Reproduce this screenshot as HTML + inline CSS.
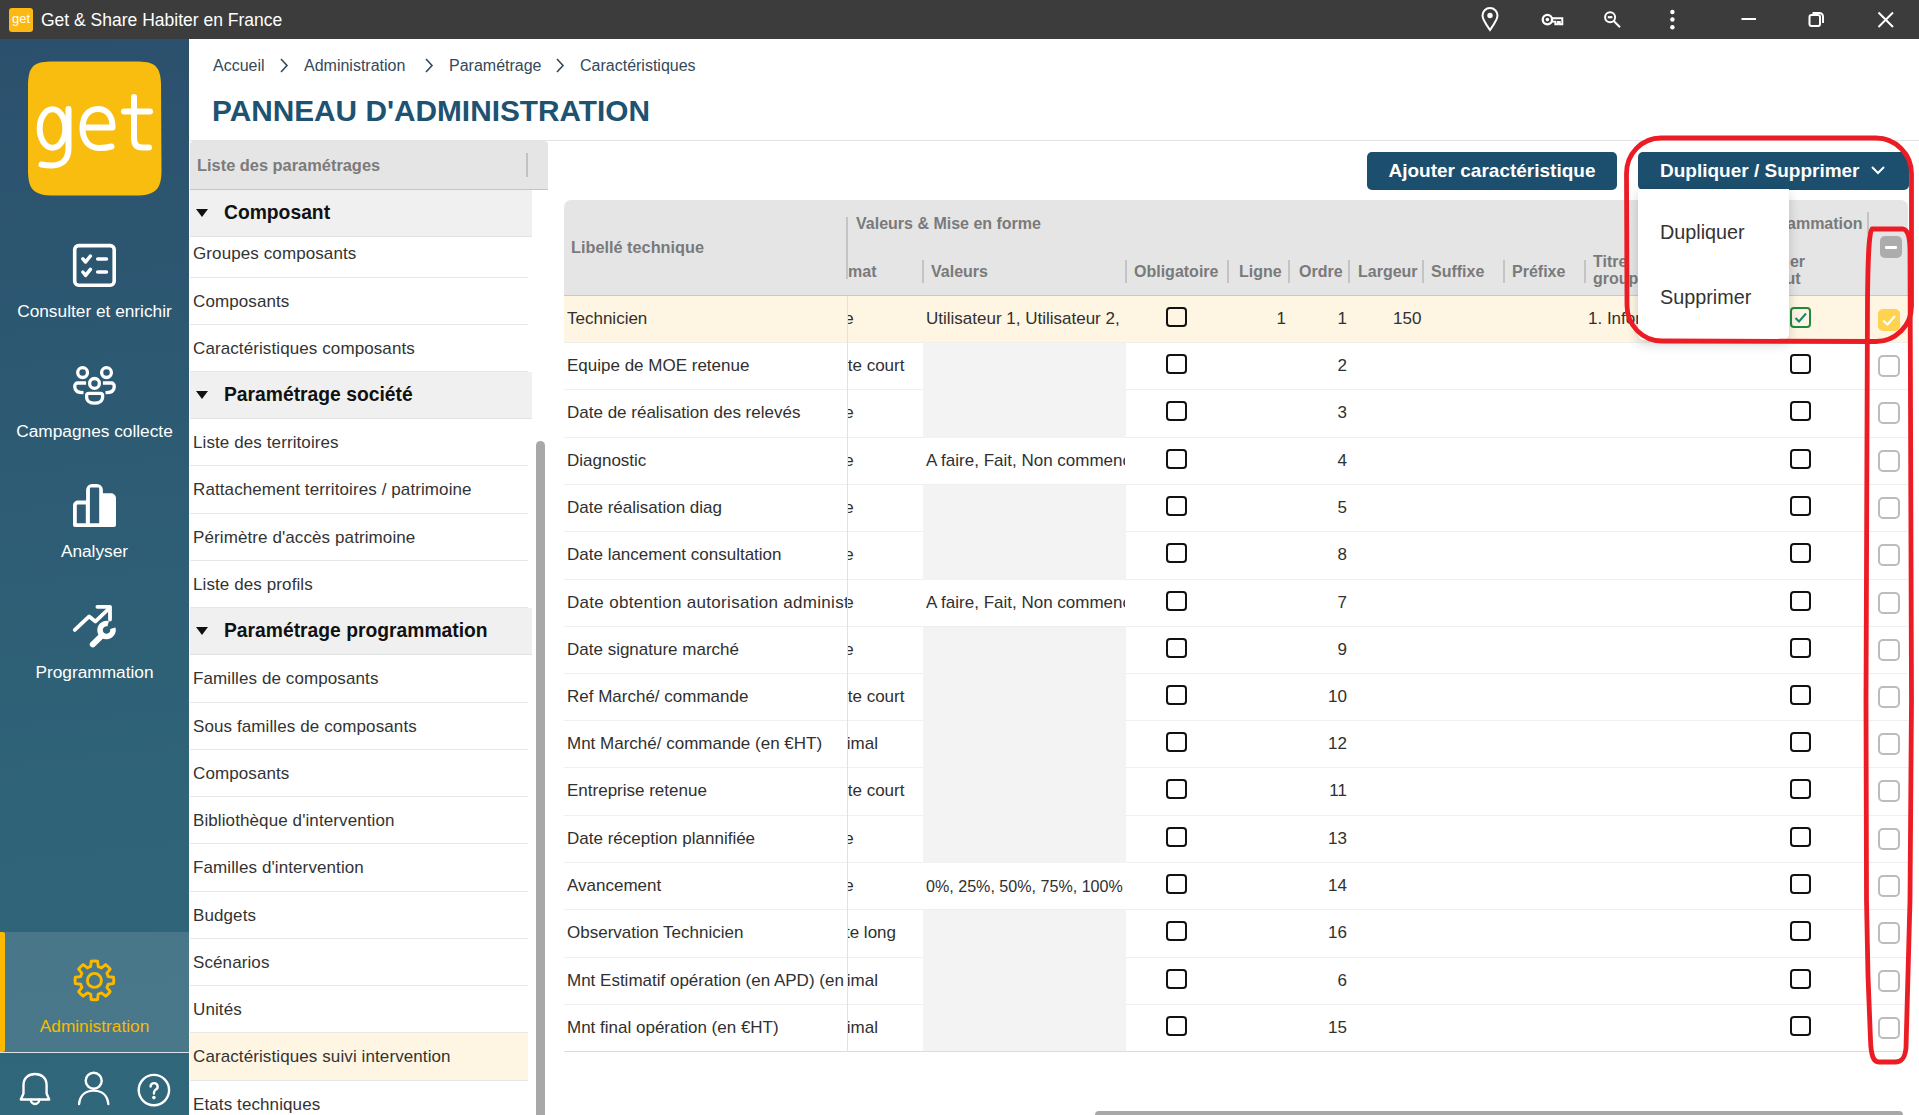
<!DOCTYPE html><html><head><meta charset="utf-8"><style>
*{box-sizing:border-box;margin:0;padding:0}
html,body{width:1919px;height:1115px;overflow:hidden;background:#fff;font-family:"Liberation Sans",sans-serif;position:relative;color:#222}
.a{position:absolute;white-space:nowrap}
#titlebar{left:0;top:0;width:1919px;height:39px;background:#3c3c3c}
#sidebar{left:0;top:39px;width:189px;height:1076px;background:linear-gradient(174deg,#2b506d 0%,#2d5a73 35%,#2f6378 68%,#30677a 100%);overflow:hidden}
.navtxt{position:absolute;left:0;width:189px;text-align:center;color:#fff;font-size:17.3px;line-height:20px}
.bc{color:#34495a;font-size:16px;line-height:20px}
.lp-item{position:absolute;left:190px;width:338px;height:47px;border-bottom:1px solid #e6e6e6;font-size:17px;letter-spacing:0.1px;color:#333;padding-left:3px;line-height:48px}
.lp-grp{position:absolute;left:190px;width:342px;height:47px;background:#f0f0f0;border-bottom:1px solid #e2e2e2;font-size:19.3px;font-weight:bold;color:#111;padding-left:34px;line-height:46px}
.tri{position:absolute;left:6px;top:19px;width:0;height:0;border-left:6px solid transparent;border-right:6px solid transparent;border-top:8px solid #111}
.btn{position:absolute;top:152px;height:38px;background:#1c4e6d;border-radius:5px;color:#fff;font-size:19px;font-weight:bold;line-height:38px;text-align:center}
.th{position:absolute;font-size:16px;font-weight:bold;color:#7a7a7a;line-height:18px;white-space:nowrap}
.dv{position:absolute;width:2px;background:#c4c4c4}
.row{position:absolute;left:564px;width:1344px;border-bottom:1px solid #efefef}
.td{position:absolute;font-size:17px;color:#303030;line-height:20px;white-space:nowrap}
.cb{position:absolute;width:20.5px;height:20px;border:2px solid #111;border-radius:4px}
.cb2{position:absolute;width:22px;height:22px;border:2px solid #bcbcbc;border-radius:5px}
</style></head><body>
<div id="titlebar" class="a">
<div class="a" style="left:9px;top:8px;width:24px;height:24px;background:#fdb813;border-radius:3px;color:#fff;font-size:13px;line-height:21px;text-align:center">get</div>
<div class="a" style="left:41px;top:10px;font-size:17.5px;line-height:20px;color:#fff">Get &amp; Share Habiter en France</div>
<svg class="a" style="left:1470px;top:0" width="449" height="39" viewBox="1470 0 449 39">
<g fill="none" stroke="#fff" stroke-width="2">
<path d="M1490 30 C1485.5 23.5 1482.5 19.5 1482.5 15.5 A7.5 7.5 0 0 1 1497.5 15.5 C1497.5 19.5 1494.5 23.5 1490 30 Z"/>
<circle cx="1547.4" cy="19.6" r="4.7" stroke-width="2.3"/>
<path d="M1552 18.2 H1562.3 V24.3 H1559.8 V22 H1557.8 V24.3 H1555.3 V21.6 H1552" stroke-width="1.9"/>
<circle cx="1610.1" cy="17.2" r="5" stroke-width="2"/>
<path d="M1607.8 17.2 H1612.4" stroke-width="2.2"/>
<path d="M1614 21.2 L1620 27.3" stroke-width="2"/>
<path d="M1741.5 19 H1756"/>
<rect x="1809.5" y="15" width="10.5" height="11" rx="2"/>
<path d="M1812.5 13 H1819.5 A3.5 3.5 0 0 1 1823 16.5 V23"/>
<path d="M1878.5 12.5 L1893 27 M1893 12.5 L1878.5 27"/>
</g>
<circle cx="1490" cy="15.5" r="2.7" fill="#fff"/>
<circle cx="1547.4" cy="19.6" r="1.8" fill="#fff"/>
<circle cx="1672.4" cy="12" r="2.2" fill="#fff"/>
<circle cx="1672.4" cy="19.5" r="2.2" fill="#fff"/>
<circle cx="1672.4" cy="27.2" r="2.2" fill="#fff"/>
</svg>
</div>
<div id="sidebar" class="a">
<svg class="a" style="left:0;top:0" width="189" height="200" viewBox="0 39 189 200">
<path d="M50 61.5 L139 61.5 C155 62 160.5 67 161 84 L161.5 172 C161 189 155.5 194.5 139 195.5 L50 195.5 C33.5 194.5 28.5 189 28 172 L28 84 C28.5 67 33.5 62 50 61.5 Z" fill="#f8bd0f"/>
<g fill="none" stroke="#fff" stroke-width="6" stroke-linecap="round" stroke-linejoin="round">
<ellipse cx="52.5" cy="128.5" rx="12.8" ry="19.2"/>
<path d="M68.5 109 L68.5 148 C68.5 160 62 165.5 52 165.5 C47 165.5 44 165 41.5 164.5"/>
<path d="M82.5 127.5 L112.5 127.5 C112.5 115 106.5 109 98 109 C88 109 82.5 117 82.5 128.5 C82.5 140 89 148 99 148 C104 148 108 147.5 111.5 146.5"/>
<path d="M134 97 L134 138 C134 145 137 147.5 142 147.5 L149 147.5"/>
<path d="M124 111.5 L150 111.5"/>
</g></svg>
<div class="navtxt" style="top:262px">Consulter et enrichir</div>
<div class="navtxt" style="top:382px">Campagnes collecte</div>
<div class="navtxt" style="top:502px">Analyser</div>
<div class="navtxt" style="top:623px">Programmation</div>
<svg class="a" style="left:0;top:0" width="189" height="1076" viewBox="0 39 189 1076">
<g fill="none" stroke="#fff" stroke-width="3.6" stroke-linecap="round" stroke-linejoin="round">
<rect x="74.7" y="245.6" width="39.5" height="39.6" rx="4"/>
</g>
<g fill="none" stroke="#fff" stroke-width="3.5" stroke-linecap="round" stroke-linejoin="round">
<path d="M82.9 258.9 L85.6 262 L90.4 256 M82.9 272 L85.6 275.3 L90.4 269.3"/>
<path d="M97.7 259 H106.5 M97.7 272 H106.5"/>
</g>
<g fill="none" stroke="#fff" stroke-width="3.3" stroke-linecap="butt" stroke-linejoin="round">
<circle cx="82.6" cy="372.6" r="4.9"/><circle cx="106.5" cy="372.6" r="4.9"/><circle cx="94.5" cy="383.4" r="4.9"/>
<path d="M86.1 383 H77.6 A2.8 2.8 0 0 0 74.8 385.8 V387 C74.8 391 78.5 392.7 83.5 392.7"/>
<path d="M102.9 383 H111.4 A2.8 2.8 0 0 1 114.2 385.8 V387 C114.2 391 110.5 392.7 105.5 392.7"/>
<path d="M88.9 393.4 H100.3 A2.3 2.3 0 0 1 102.6 395.7 V397 C102.6 401 99 403.2 94.6 403.2 C90.2 403.2 86.6 401 86.6 397 V395.7 A2.3 2.3 0 0 1 88.9 393.4 Z"/>
</g>
<path fill="#fff" fill-rule="evenodd" d="M73 525 V505.6 A5 5 0 0 1 78 500.6 H86.1 V490 A6 6 0 0 1 92.1 484 H96.9 A6 6 0 0 1 102.9 490 V493.3 H111 A5 5 0 0 1 116 498.3 V525 A2 2 0 0 1 114 527 H75 A2 2 0 0 1 73 525 Z M76.8 505.6 A1 1 0 0 1 77.8 504.6 H85.8 V523.2 H76.8 Z M89.9 488.5 A1 1 0 0 1 90.9 487.5 H98.2 A1 1 0 0 1 99.2 488.5 V523.2 H89.9 Z"/>
<g fill="none" stroke="#fff" stroke-width="3.8" stroke-linecap="round" stroke-linejoin="round">
<path d="M74.8 629.9 L89.2 616.4 L95.5 621.4 L108.5 609"/>
<path d="M97.4 606.8 H110 V619.5"/>
</g>
<path d="M112.8 628.3 A6.5 6.5 0 1 1 108.2 623.7" fill="none" stroke="#fff" stroke-width="5.5"/>
<path d="M100.5 636.8 L92.8 644.3" fill="none" stroke="#fff" stroke-width="6" stroke-linecap="round"/>
</svg>
<div class="a" style="left:0;top:893px;width:189px;height:120px;background:rgba(255,255,255,0.12)"></div>
<div class="a" style="left:0;top:893px;width:5px;height:120px;background:#fbb900;border-radius:0 2px 2px 0"></div>
<div class="a" style="left:0;top:1013px;width:189px;height:1px;background:#d9e2e6"></div>
<div class="navtxt" style="top:977px;color:#fbb900">Administration</div>
<svg class="a" style="left:0;top:0" width="189" height="1076" viewBox="0 39 189 1076">
<g fill="none" stroke="#fbb900" stroke-width="2.9" stroke-linejoin="round">
<circle cx="94.4" cy="980.4" r="7"/>
<path d="M90.58 966.62 L91.20 961.27 A19.4 19.4 0 0 1 97.60 961.27 L98.22 966.62 A14.3 14.3 0 0 1 101.44 967.95 L105.67 964.61 A19.4 19.4 0 0 1 110.19 969.13 L106.85 973.36 A14.3 14.3 0 0 1 108.18 976.58 L113.53 977.20 A19.4 19.4 0 0 1 113.53 983.60 L108.18 984.22 A14.3 14.3 0 0 1 106.85 987.44 L110.19 991.67 A19.4 19.4 0 0 1 105.67 996.19 L101.44 992.85 A14.3 14.3 0 0 1 98.22 994.18 L97.60 999.53 A19.4 19.4 0 0 1 91.20 999.53 L90.58 994.18 A14.3 14.3 0 0 1 87.36 992.85 L83.13 996.19 A19.4 19.4 0 0 1 78.61 991.67 L81.95 987.44 A14.3 14.3 0 0 1 80.62 984.22 L75.27 983.60 A19.4 19.4 0 0 1 75.27 977.20 L80.62 976.58 A14.3 14.3 0 0 1 81.95 973.36 L78.61 969.13 A19.4 19.4 0 0 1 83.13 964.61 L87.36 967.95 A14.3 14.3 0 0 1 90.58 966.62 Z"/>
</g>
<g fill="none" stroke="#fff" stroke-width="2.4" stroke-linecap="round" stroke-linejoin="round">
<path d="M20.8 1099.5 H49.2 L46.6 1093.5 V1085 C46.6 1078 41.5 1074 35 1074 C28.5 1074 23.5 1078 23.5 1085 V1093.5 Z"/>
<path d="M30.8 1099.8 A4.2 4.2 0 0 0 39.2 1099.8"/>
<circle cx="93.7" cy="1080.8" r="8"/>
<path d="M79.1 1104 C80 1095 86 1090.6 93.7 1090.6 C101.4 1090.6 107.4 1095 108.3 1104"/>
<circle cx="153.9" cy="1090.1" r="15.2"/>
<path d="M150.6 1086.6 A3.5 3.5 0 1 1 155.3 1089.9 C154.3 1090.7 153.9 1091.5 153.9 1093.6"/>
</g>
<circle cx="153.9" cy="1097.6" r="1.8" fill="#fff"/>
</svg>
</div>
<div class="a bc" style="left:213px;top:55.5px">Accueil</div>
<div class="a bc" style="left:304px;top:55.5px">Administration</div>
<div class="a bc" style="left:449px;top:55.5px">Paramétrage</div>
<div class="a bc" style="left:580px;top:55.5px">Caractéristiques</div>
<svg class="a" style="left:270px;top:50px" width="320" height="30" viewBox="270 50 320 30"><g fill="none" stroke="#34495a" stroke-width="1.6"><path d="M281 59 L287 65.5 L281 72"/><path d="M426 59 L432 65.5 L426 72"/><path d="M557 59 L563 65.5 L557 72"/></g></svg>
<div class="a" style="left:212px;top:93px;font-size:29.8px;line-height:36px;font-weight:bold;color:#1d5271">PANNEAU D'ADMINISTRATION</div>
<div class="a" style="left:190px;top:140px;width:1729px;height:1px;background:#e3e3e3"></div>
<div class="a" style="left:190px;top:141px;width:358px;height:49px;background:#e5e5e5;border-bottom:1px solid #c4c4c4;border-radius:4px 4px 0 0"></div>
<div class="a" style="left:197px;top:155px;font-size:16.4px;line-height:20px;font-weight:bold;color:#7b7b7b">Liste des paramétrages</div>
<div class="a" style="left:526px;top:153px;width:2px;height:24px;background:#c2c2c2"></div>
<div class="lp-item" style="top:230px;height:48px;">Groupes composants</div>
<div class="lp-item" style="top:278px;height:47px;">Composants</div>
<div class="lp-item" style="top:325px;height:47px;">Caractéristiques composants</div>
<div class="lp-grp" style="top:372px;height:47px"><div class="tri"></div>Paramétrage société</div>
<div class="lp-item" style="top:419px;height:47px;">Liste des territoires</div>
<div class="lp-item" style="top:466px;height:48px;">Rattachement territoires / patrimoine</div>
<div class="lp-item" style="top:514px;height:47px;">Périmètre d'accès patrimoine</div>
<div class="lp-item" style="top:561px;height:47px;">Liste des profils</div>
<div class="lp-grp" style="top:608px;height:47px"><div class="tri"></div>Paramétrage programmation</div>
<div class="lp-item" style="top:655px;height:48px;">Familles de composants</div>
<div class="lp-item" style="top:703px;height:47px;">Sous familles de composants</div>
<div class="lp-item" style="top:750px;height:47px;">Composants</div>
<div class="lp-item" style="top:797px;height:47px;">Bibliothèque d'intervention</div>
<div class="lp-item" style="top:844px;height:48px;">Familles d'intervention</div>
<div class="lp-item" style="top:892px;height:47px;">Budgets</div>
<div class="lp-item" style="top:939px;height:47px;">Scénarios</div>
<div class="lp-item" style="top:986px;height:47px;">Unités</div>
<div class="lp-item" style="top:1033px;height:48px;background:#fef5e2;">Caractéristiques suivi intervention</div>
<div class="lp-item" style="top:1081px;height:47px;">Etats techniques</div>
<div class="lp-grp" style="top:190px;height:47px"><div class="tri"></div>Composant</div>
<div class="a" style="left:536px;top:441px;width:9px;height:700px;background:#a8a8a8;border-radius:4.5px"></div>
<div class="btn" style="left:1367px;width:250px">Ajouter caractéristique</div>
<div class="btn" style="left:1638px;width:271px;text-align:left;padding-left:22px">Dupliquer / Supprimer</div>
<svg class="a" style="left:1868px;top:160px" width="20" height="20"><path d="M4 7 L10 13 L16 7" fill="none" stroke="#fff" stroke-width="2"/></svg>
<div class="a" style="left:564px;top:200px;width:1344px;height:96px;background:#e5e5e5;border-radius:7px 7px 0 0;border-bottom:1px solid #c9c9c9"></div>
<div class="th" style="left:571px;top:238px;font-size:16.3px">Libellé technique</div>
<div class="dv" style="left:846px;top:217px;height:62px"></div>
<div class="th" style="left:856px;top:215px">Valeurs &amp; Mise en forme</div>
<div class="th" style="left:1787px;top:215px">ammation</div>
<div class="dv" style="left:1867px;top:212px;height:22px"></div>
<div class="th" style="left:848px;top:263px">mat</div>
<div class="th" style="left:931px;top:263px">Valeurs</div>
<div class="th" style="left:1134px;top:263px">Obligatoire</div>
<div class="th" style="left:1239px;top:263px">Ligne</div>
<div class="th" style="left:1299px;top:263px">Ordre</div>
<div class="th" style="left:1358px;top:263px">Largeur</div>
<div class="th" style="left:1431px;top:263px">Suffixe</div>
<div class="th" style="left:1512px;top:263px">Préfixe</div>
<div class="dv" style="left:922px;top:260px;height:23px"></div>
<div class="dv" style="left:1125px;top:260px;height:23px"></div>
<div class="dv" style="left:1227px;top:260px;height:23px"></div>
<div class="dv" style="left:1288px;top:260px;height:23px"></div>
<div class="dv" style="left:1348px;top:260px;height:23px"></div>
<div class="dv" style="left:1422px;top:260px;height:23px"></div>
<div class="dv" style="left:1503px;top:260px;height:23px"></div>
<div class="dv" style="left:1584px;top:260px;height:23px"></div>
<div class="th" style="left:1593px;top:253px;line-height:17px">Titre<br>groupe</div>
<div class="th" style="left:1740px;top:253px;line-height:17px;width:65px;text-align:right">Afficher<br>défaut&nbsp;</div>
<div class="a" style="left:1880px;top:236px;width:22px;height:22px;background:#acacac;border-radius:5px"><div class="a" style="left:5px;top:10px;width:12px;height:2.5px;background:#fff;border-radius:1px"></div></div>
<div class="row" style="top:296px;height:47px;background:#fef5e2"></div>
<div class="td" style="left:567px;top:308.5px;width:280px;overflow:hidden;">Technicien</div>
<div class="a" style="left:847px;top:308.5px;width:75px;height:22px;overflow:hidden"><div class="td" style="left:-29.3px;top:0">Date</div></div>
<div class="td" style="left:926px;top:308.5px;width:199px;overflow:hidden;">Utilisateur 1, Utilisateur 2,</div>
<div class="cb" style="left:1166px;top:307px"></div>
<div class="td" style="left:1237px;top:308.5px;width:49px;text-align:right">1</div>
<div class="td" style="left:1297px;top:308.5px;width:50px;text-align:right">1</div>
<div class="td" style="left:1393px;top:308.5px">150</div>
<div class="td" style="left:1588px;top:308.5px">1. Infor</div>
<div class="a" style="left:1790px;top:307px;width:21px;height:20.5px;border:2px solid #1f8a3c;border-radius:4px"><svg class="a" style="left:1px;top:1px" width="15" height="15"><path d="M2.5 8 L6 11.5 L13 3.5" fill="none" stroke="#16876e" stroke-width="2"/></svg></div>
<div class="a" style="left:1878px;top:308.5px;width:22px;height:22px;background:#ffd24f;border-radius:5px"><svg class="a" style="left:0;top:0" width="22" height="22"><path d="M5 11.5 L9.5 15.5 L17 7" fill="none" stroke="#fff" stroke-width="2.2"/></svg></div>
<div class="row" style="top:343px;height:47px;background:#fff"></div>
<div class="a" style="left:923px;top:343px;width:203px;height:47px;background:#f3f3f3"></div>
<div class="td" style="left:567px;top:355.5px;width:280px;overflow:hidden;">Equipe de MOE retenue</div>
<div class="a" style="left:847px;top:355.5px;width:75px;height:22px;overflow:hidden"><div class="td" style="left:-25.7px;top:0">Texte court</div></div>
<div class="cb" style="left:1166px;top:354px"></div>
<div class="td" style="left:1297px;top:355.5px;width:50px;text-align:right">2</div>
<div class="cb" style="left:1790px;top:354px"></div>
<div class="cb2" style="left:1878px;top:354.5px"></div>
<div class="row" style="top:390px;height:48px;background:#fff"></div>
<div class="a" style="left:923px;top:390px;width:203px;height:48px;background:#f3f3f3"></div>
<div class="td" style="left:567px;top:403.0px;width:280px;overflow:hidden;">Date de réalisation des relevés</div>
<div class="a" style="left:847px;top:403.0px;width:75px;height:22px;overflow:hidden"><div class="td" style="left:-29.3px;top:0">Date</div></div>
<div class="cb" style="left:1166px;top:401px"></div>
<div class="td" style="left:1297px;top:403.0px;width:50px;text-align:right">3</div>
<div class="cb" style="left:1790px;top:401px"></div>
<div class="cb2" style="left:1878px;top:401.5px"></div>
<div class="row" style="top:438px;height:47px;background:#fff"></div>
<div class="td" style="left:567px;top:450.5px;width:280px;overflow:hidden;">Diagnostic</div>
<div class="a" style="left:847px;top:450.5px;width:75px;height:22px;overflow:hidden"><div class="td" style="left:-29.3px;top:0">Date</div></div>
<div class="td" style="left:926px;top:450.5px;width:199px;overflow:hidden;">A faire, Fait, Non commencé</div>
<div class="cb" style="left:1166px;top:449px"></div>
<div class="td" style="left:1297px;top:450.5px;width:50px;text-align:right">4</div>
<div class="cb" style="left:1790px;top:449px"></div>
<div class="cb2" style="left:1878px;top:449.5px"></div>
<div class="row" style="top:485px;height:47px;background:#fff"></div>
<div class="a" style="left:923px;top:485px;width:203px;height:47px;background:#f3f3f3"></div>
<div class="td" style="left:567px;top:497.5px;width:280px;overflow:hidden;">Date réalisation diag</div>
<div class="a" style="left:847px;top:497.5px;width:75px;height:22px;overflow:hidden"><div class="td" style="left:-29.3px;top:0">Date</div></div>
<div class="cb" style="left:1166px;top:496px"></div>
<div class="td" style="left:1297px;top:497.5px;width:50px;text-align:right">5</div>
<div class="cb" style="left:1790px;top:496px"></div>
<div class="cb2" style="left:1878px;top:496.5px"></div>
<div class="row" style="top:532px;height:48px;background:#fff"></div>
<div class="a" style="left:923px;top:532px;width:203px;height:48px;background:#f3f3f3"></div>
<div class="td" style="left:567px;top:545.0px;width:280px;overflow:hidden;">Date lancement consultation</div>
<div class="a" style="left:847px;top:545.0px;width:75px;height:22px;overflow:hidden"><div class="td" style="left:-29.3px;top:0">Date</div></div>
<div class="cb" style="left:1166px;top:543px"></div>
<div class="td" style="left:1297px;top:545.0px;width:50px;text-align:right">8</div>
<div class="cb" style="left:1790px;top:543px"></div>
<div class="cb2" style="left:1878px;top:543.5px"></div>
<div class="row" style="top:580px;height:47px;background:#fff"></div>
<div class="td" style="left:567px;top:592.5px;width:280px;overflow:hidden;letter-spacing:0.3px;">Date obtention autorisation administrative</div>
<div class="a" style="left:847px;top:592.5px;width:75px;height:22px;overflow:hidden"><div class="td" style="left:-29.3px;top:0">Date</div></div>
<div class="td" style="left:926px;top:592.5px;width:199px;overflow:hidden;">A faire, Fait, Non commencé</div>
<div class="cb" style="left:1166px;top:591px"></div>
<div class="td" style="left:1297px;top:592.5px;width:50px;text-align:right">7</div>
<div class="cb" style="left:1790px;top:591px"></div>
<div class="cb2" style="left:1878px;top:591.5px"></div>
<div class="row" style="top:627px;height:47px;background:#fff"></div>
<div class="a" style="left:923px;top:627px;width:203px;height:47px;background:#f3f3f3"></div>
<div class="td" style="left:567px;top:639.5px;width:280px;overflow:hidden;">Date signature marché</div>
<div class="a" style="left:847px;top:639.5px;width:75px;height:22px;overflow:hidden"><div class="td" style="left:-29.3px;top:0">Date</div></div>
<div class="cb" style="left:1166px;top:638px"></div>
<div class="td" style="left:1297px;top:639.5px;width:50px;text-align:right">9</div>
<div class="cb" style="left:1790px;top:638px"></div>
<div class="cb2" style="left:1878px;top:638.5px"></div>
<div class="row" style="top:674px;height:47px;background:#fff"></div>
<div class="a" style="left:923px;top:674px;width:203px;height:47px;background:#f3f3f3"></div>
<div class="td" style="left:567px;top:686.5px;width:280px;overflow:hidden;">Ref Marché/ commande</div>
<div class="a" style="left:847px;top:686.5px;width:75px;height:22px;overflow:hidden"><div class="td" style="left:-25.7px;top:0">Texte court</div></div>
<div class="cb" style="left:1166px;top:685px"></div>
<div class="td" style="left:1297px;top:686.5px;width:50px;text-align:right">10</div>
<div class="cb" style="left:1790px;top:685px"></div>
<div class="cb2" style="left:1878px;top:685.5px"></div>
<div class="row" style="top:721px;height:47px;background:#fff"></div>
<div class="a" style="left:923px;top:721px;width:203px;height:47px;background:#f3f3f3"></div>
<div class="td" style="left:567px;top:733.5px;width:280px;overflow:hidden;">Mnt Marché/ commande (en €HT)</div>
<div class="a" style="left:847px;top:733.5px;width:75px;height:22px;overflow:hidden"><div class="td" style="left:-30.4px;top:0">Décimal</div></div>
<div class="cb" style="left:1166px;top:732px"></div>
<div class="td" style="left:1297px;top:733.5px;width:50px;text-align:right">12</div>
<div class="cb" style="left:1790px;top:732px"></div>
<div class="cb2" style="left:1878px;top:732.5px"></div>
<div class="row" style="top:768px;height:48px;background:#fff"></div>
<div class="a" style="left:923px;top:768px;width:203px;height:48px;background:#f3f3f3"></div>
<div class="td" style="left:567px;top:781.0px;width:280px;overflow:hidden;">Entreprise retenue</div>
<div class="a" style="left:847px;top:781.0px;width:75px;height:22px;overflow:hidden"><div class="td" style="left:-25.7px;top:0">Texte court</div></div>
<div class="cb" style="left:1166px;top:779px"></div>
<div class="td" style="left:1297px;top:781.0px;width:50px;text-align:right">11</div>
<div class="cb" style="left:1790px;top:779px"></div>
<div class="cb2" style="left:1878px;top:779.5px"></div>
<div class="row" style="top:816px;height:47px;background:#fff"></div>
<div class="a" style="left:923px;top:816px;width:203px;height:47px;background:#f3f3f3"></div>
<div class="td" style="left:567px;top:828.5px;width:280px;overflow:hidden;">Date réception plannifiée</div>
<div class="a" style="left:847px;top:828.5px;width:75px;height:22px;overflow:hidden"><div class="td" style="left:-29.3px;top:0">Date</div></div>
<div class="cb" style="left:1166px;top:827px"></div>
<div class="td" style="left:1297px;top:828.5px;width:50px;text-align:right">13</div>
<div class="cb" style="left:1790px;top:827px"></div>
<div class="cb2" style="left:1878px;top:827.5px"></div>
<div class="row" style="top:863px;height:47px;background:#fff"></div>
<div class="td" style="left:567px;top:875.5px;width:280px;overflow:hidden;">Avancement</div>
<div class="a" style="left:847px;top:875.5px;width:75px;height:22px;overflow:hidden"><div class="td" style="left:-29.3px;top:0">Date</div></div>
<div class="td" style="left:926px;top:875.5px;width:199px;overflow:hidden;font-size:16.1px;">0%, 25%, 50%, 75%, 100%</div>
<div class="cb" style="left:1166px;top:874px"></div>
<div class="td" style="left:1297px;top:875.5px;width:50px;text-align:right">14</div>
<div class="cb" style="left:1790px;top:874px"></div>
<div class="cb2" style="left:1878px;top:874.5px"></div>
<div class="row" style="top:910px;height:48px;background:#fff"></div>
<div class="a" style="left:923px;top:910px;width:203px;height:48px;background:#f3f3f3"></div>
<div class="td" style="left:567px;top:923.0px;width:280px;overflow:hidden;">Observation Technicien</div>
<div class="a" style="left:847px;top:923.0px;width:75px;height:22px;overflow:hidden"><div class="td" style="left:-28.5px;top:0">Texte long</div></div>
<div class="cb" style="left:1166px;top:921px"></div>
<div class="td" style="left:1297px;top:923.0px;width:50px;text-align:right">16</div>
<div class="cb" style="left:1790px;top:921px"></div>
<div class="cb2" style="left:1878px;top:921.5px"></div>
<div class="row" style="top:958px;height:47px;background:#fff"></div>
<div class="a" style="left:923px;top:958px;width:203px;height:47px;background:#f3f3f3"></div>
<div class="td" style="left:567px;top:970.5px;width:280px;overflow:hidden;">Mnt Estimatif opération (en APD) (en €HT)</div>
<div class="a" style="left:847px;top:970.5px;width:75px;height:22px;overflow:hidden"><div class="td" style="left:-30.4px;top:0">Décimal</div></div>
<div class="cb" style="left:1166px;top:969px"></div>
<div class="td" style="left:1297px;top:970.5px;width:50px;text-align:right">6</div>
<div class="cb" style="left:1790px;top:969px"></div>
<div class="cb2" style="left:1878px;top:969.5px"></div>
<div class="row" style="top:1005px;height:47px;background:#fff"></div>
<div class="a" style="left:923px;top:1005px;width:203px;height:47px;background:#f3f3f3"></div>
<div class="td" style="left:567px;top:1017.5px;width:280px;overflow:hidden;">Mnt final opération (en €HT)</div>
<div class="a" style="left:847px;top:1017.5px;width:75px;height:22px;overflow:hidden"><div class="td" style="left:-30.4px;top:0">Décimal</div></div>
<div class="cb" style="left:1166px;top:1016px"></div>
<div class="td" style="left:1297px;top:1017.5px;width:50px;text-align:right">15</div>
<div class="cb" style="left:1790px;top:1016px"></div>
<div class="cb2" style="left:1878px;top:1016.5px"></div>
<div class="a" style="left:847px;top:296px;width:1px;height:756px;background:#e2e2e2"></div>
<div class="a" style="left:564px;top:1051px;width:1344px;height:1px;background:#dcdcdc"></div>
<div class="a" style="left:1095px;top:1111px;width:808px;height:8px;background:#a8a8a8;border-radius:4px"></div>
<div class="a" style="left:1638px;top:189px;width:151px;height:151px;background:#fff;border-radius:0 0 6px 6px;box-shadow:0 4px 12px rgba(0,0,0,0.18)"></div>
<div class="a" style="left:1660px;top:221px;font-size:19.8px;line-height:22px;color:#333">Dupliquer</div>
<div class="a" style="left:1660px;top:286px;font-size:19.8px;line-height:22px;color:#333">Supprimer</div>
<svg class="a" style="left:0;top:0" width="1919" height="1115" viewBox="0 0 1919 1115">
<g fill="none" stroke="#ec1c24" stroke-width="4.8" stroke-linecap="round" stroke-linejoin="round">
<path d="M1661 138 L1876 138 C1895.5 138 1911.5 154 1911.5 173.5 L1911.5 306 C1911.5 325.5 1895.5 341.5 1876 341.5 L1662 341 C1642.5 341 1627 325 1627 305.5 L1626.5 173.5 C1626.5 154 1641.5 138 1661 138 Z"/>
<path d="M1872 229 L1903 229 C1908 230 1910 236 1910 252 L1911.5 700 L1910 900 L1906 1048 C1905 1058 1902 1062 1895 1062 L1879 1062 C1873 1062 1871 1055 1870.5 1040 L1868 976 L1866.5 900 L1866 700 L1867.5 300 C1868 252 1869 233 1872 229 Z"/>
</g></svg>
</body></html>
